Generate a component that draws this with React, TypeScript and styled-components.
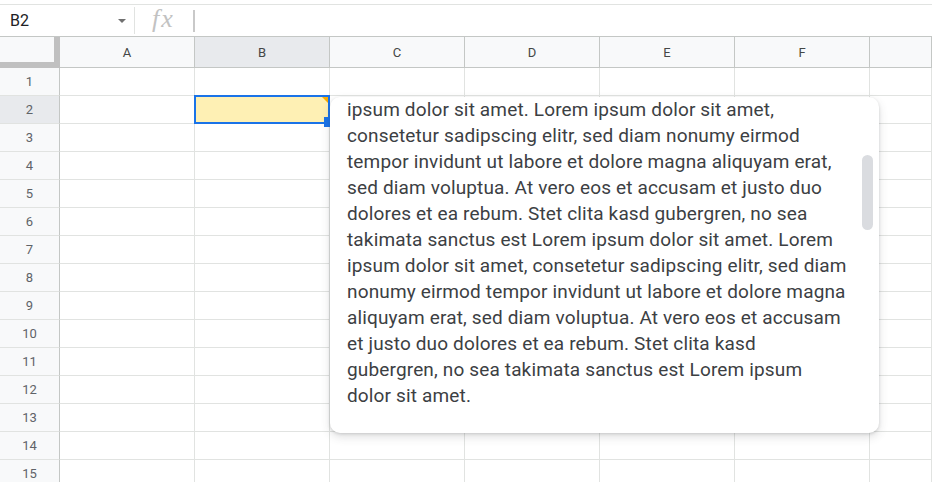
import styled, { createGlobalStyle } from 'styled-components';

const GlobalStyle = createGlobalStyle`
  html, body {
    margin: 0;
    padding: 0;
    background: #ffffff;
    overflow: hidden;
  }
  body {
    font-family: Roboto, "Liberation Sans", Arial, sans-serif;
  }
`;

const COLUMNS = ['A', 'B', 'C', 'D', 'E', 'F', ''];
const ROW_COUNT = 15;
const SELECTED_COL = 'B';
const SELECTED_ROW = 2;

const NOTE_LINES = [
  'ipsum dolor sit amet. Lorem ipsum dolor sit amet,',
  'consetetur sadipscing elitr, sed diam nonumy eirmod',
  'tempor invidunt ut labore et dolore magna aliquyam erat,',
  'sed diam voluptua. At vero eos et accusam et justo duo',
  'dolores et ea rebum. Stet clita kasd gubergren, no sea',
  'takimata sanctus est Lorem ipsum dolor sit amet. Lorem',
  'ipsum dolor sit amet, consetetur sadipscing elitr, sed diam',
  'nonumy eirmod tempor invidunt ut labore et dolore magna',
  'aliquyam erat, sed diam voluptua. At vero eos et accusam',
  'et justo duo dolores et ea rebum. Stet clita kasd',
  'gubergren, no sea takimata sanctus est Lorem ipsum',
  'dolor sit amet.',
];

const Page = styled.div`
  width: 932px;
  height: 482px;
  padding-top: 4px;
  box-sizing: border-box;
  overflow: hidden;
`;

const FormulaBar = styled.div`
  display: flex;
  align-items: center;
  height: 33px;
  box-sizing: border-box;
  border-top: 1px solid #e1e3e1;
  border-bottom: 1px solid #c4c7c5;
`;

const NameBox = styled.div`
  display: flex;
  align-items: center;
  justify-content: space-between;
  width: 135px;
  height: 27px;
  box-sizing: border-box;
  padding: 0 8px 0 10px;
  border-right: 1px solid #e1e3e1;
  font-size: 16px;
  color: #202124;
`;

const Caret = styled.span`
  width: 0;
  height: 0;
  border-left: 4px solid transparent;
  border-right: 4px solid transparent;
  border-top: 4px solid #707070;
  margin-top: 1px;
`;

const FxLabel = styled.span`
  font-family: "Liberation Serif", "DejaVu Serif", serif;
  font-style: italic;
  font-size: 26px;
  color: #c2c2c2;
  margin-left: 17px;
  letter-spacing: 2px;
  line-height: 1;
  margin-top: -4px;
`;

const FormulaCursor = styled.span`
  width: 2px;
  height: 22px;
  background: #c9c9c9;
  margin-left: 18px;
`;

const Sheet = styled.div`
  position: relative;
`;

const Grid = styled.div`
  display: grid;
  grid-template-columns: 60px repeat(6, 135px) 1fr;
  grid-auto-rows: 28px;
  grid-template-rows: 31px;
`;

const Corner = styled.div`
  background: #f8f9fa;
  box-sizing: border-box;
  border-right: 6px solid #c0c0c0;
  border-bottom: 6px solid #c0c0c0;
`;

const ColHeader = styled.div<{ $active?: boolean }>`
  display: flex;
  align-items: center;
  justify-content: center;
  box-sizing: border-box;
  background: ${p => (p.$active ? '#e8eaed' : '#f8f9fa')};
  border-right: 1px solid #c4c7c5;
  border-bottom: 1px solid #c4c7c5;
  font-size: 13px;
  color: #444746;
`;

const RowHeader = styled.div<{ $active?: boolean }>`
  display: flex;
  align-items: center;
  justify-content: center;
  box-sizing: border-box;
  background: ${p => (p.$active ? '#e8eaed' : '#f8f9fa')};
  border-right: 1px solid #c4c7c5;
  border-bottom: 1px solid #e1e3e1;
  font-size: 13px;
  color: #5f6368;
`;

const Cell = styled.div<{ $selected?: boolean }>`
  position: relative;
  box-sizing: border-box;
  border-right: 1px solid #e1e3e1;
  border-bottom: 1px solid #e1e3e1;
  background: ${p => (p.$selected ? '#fef0b4' : '#ffffff')};

  ${p =>
    p.$selected &&
    `
    &::before {
      content: '';
      position: absolute;
      top: -1px;
      left: -1px;
      right: -1px;
      bottom: -1px;
      border: 2px solid #1a73e8;
      z-index: 1;
    }
    &::after {
      content: '';
      position: absolute;
      top: 1px;
      right: 1px;
      width: 0;
      height: 0;
      border-top: 6px solid #f9ab00;
      border-left: 6px solid transparent;
      z-index: 2;
    }
  `}
`;

const FillHandle = styled.span`
  position: absolute;
  right: -5px;
  bottom: -4px;
  width: 10px;
  height: 10px;
  background: #1a73e8;
  z-index: 2;
`;

const NotePopup = styled.div`
  position: absolute;
  left: 330px;
  top: 60px;
  width: 549px;
  height: 336px;
  box-sizing: border-box;
  background: #ffffff;
  border-radius: 10px;
  box-shadow: 0 4px 10px rgba(60, 64, 67, 0.16), 0 1px 3px rgba(60, 64, 67, 0.18);
  padding: 0 0 24px 17px;
  overflow: hidden;
  z-index: 5;
`;

const NoteText = styled.div`
  font-size: 19px;
  letter-spacing: 0.15px;
  line-height: 26px;
  color: #3c4043;
`;

const NoteLine = styled.div`
  white-space: nowrap;
`;

const ScrollThumb = styled.div`
  position: absolute;
  left: 532px;
  top: 58px;
  width: 11px;
  height: 75px;
  border-radius: 6px;
  background: #dadce0;
`;

export default function App() {
  const rows = Array.from({ length: ROW_COUNT }, (_, i) => i + 1);

  return (
    <>
      <GlobalStyle />
      <Page>
        <FormulaBar>
          <NameBox>
            <span>B2</span>
            <Caret />
          </NameBox>
          <FxLabel>fx</FxLabel>
          <FormulaCursor />
        </FormulaBar>

        <Sheet>
          <Grid>
            <Corner />
            {COLUMNS.map((c, i) => (
              <ColHeader key={`h${i}`} $active={c === SELECTED_COL}>
                {c}
              </ColHeader>
            ))}
            {rows.map(r => [
              <RowHeader key={`r${r}`} $active={r === SELECTED_ROW}>
                {r}
              </RowHeader>,
              ...COLUMNS.map((c, i) => {
                const selected = r === SELECTED_ROW && c === SELECTED_COL;
                return (
                  <Cell key={`c${r}-${i}`} $selected={selected}>
                    {selected && <FillHandle />}
                  </Cell>
                );
              }),
            ])}
          </Grid>

          <NotePopup>
            <NoteText>
              {NOTE_LINES.map((line, i) => (
                <NoteLine key={i}>{line}</NoteLine>
              ))}
            </NoteText>
            <ScrollThumb />
          </NotePopup>
        </Sheet>
      </Page>
    </>
  );
}
